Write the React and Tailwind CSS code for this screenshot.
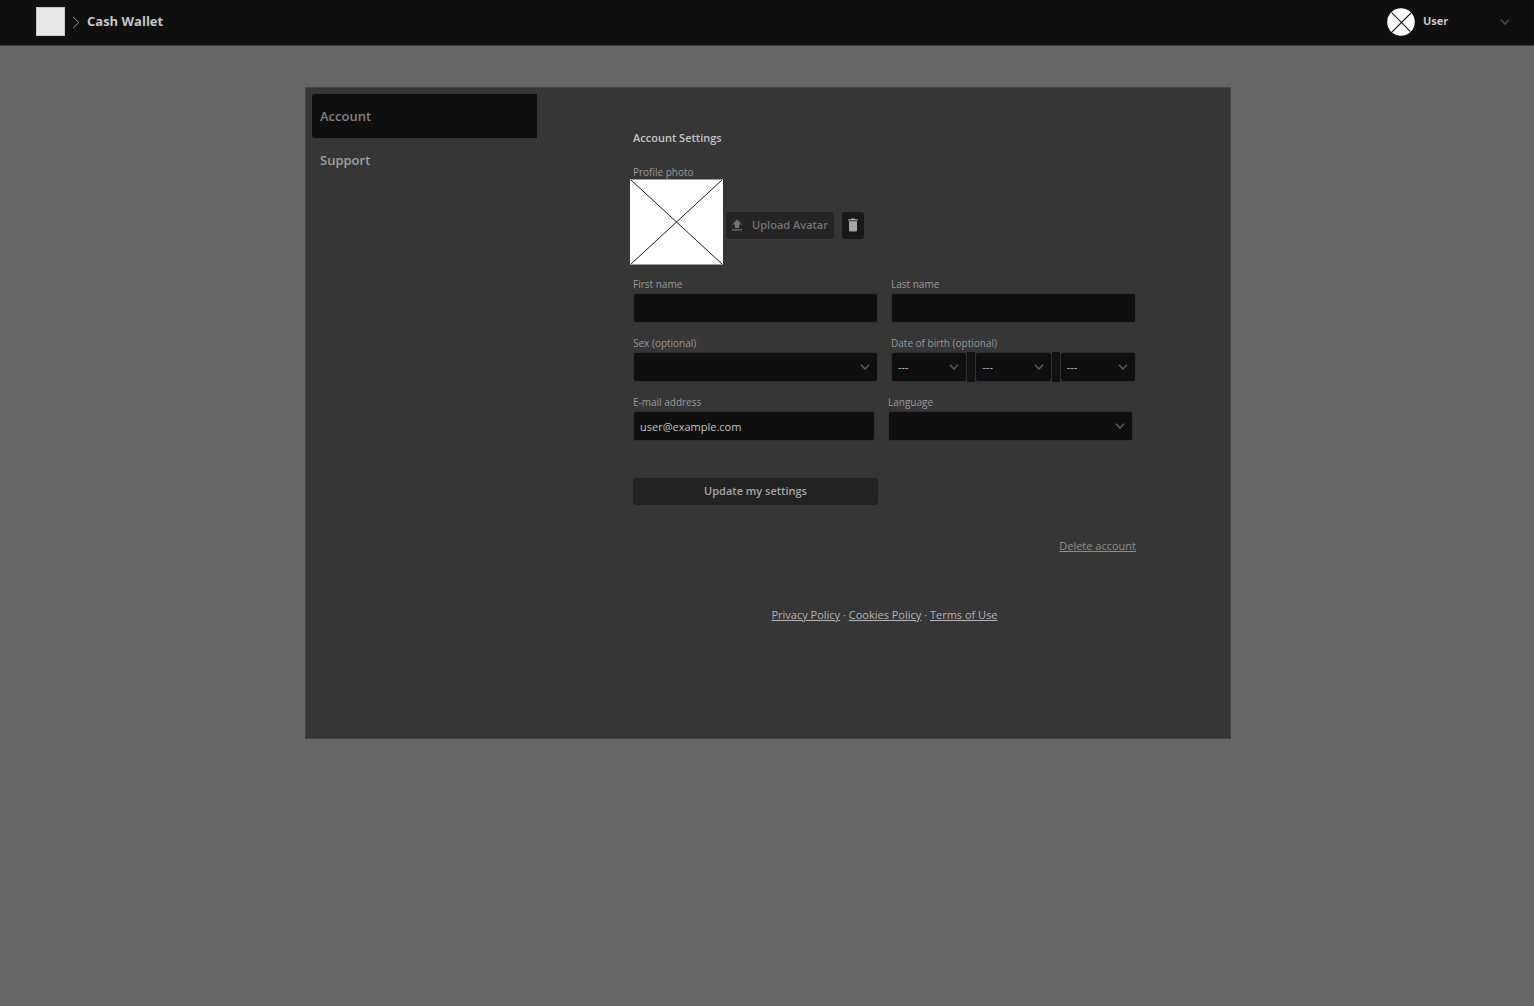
import React from "react";

const field =
  "block h-[30px] w-full appearance-none rounded-[3px] border border-[#2f2f2f] bg-[#0f0f0f] px-1.5 text-[11px] text-[#c0c0c0] outline-none";

function Chevron({ className }) {
  return (
    <svg viewBox="0 0 10 6" fill="none" stroke="currentColor" strokeWidth="1.6" className={className} aria-hidden="true">
      <path d="M1 0.8 5 5 9 0.8" />
    </svg>
  );
}

function Label({ htmlFor, children }) {
  return (
    <label htmlFor={htmlFor} className="block h-[17px] text-[10px] leading-4 text-[#999999]">
      {children}
    </label>
  );
}

function Select({ id, name, text = "" }) {
  return (
    <div className="relative min-w-0 flex-1">
      <select id={id} aria-label={name} className={field} defaultValue={text}>
        <option value={text}>{text}</option>
      </select>
      <Chevron className="pointer-events-none absolute right-2 top-3 h-1.5 w-2.5 text-[#585858]" />
    </div>
  );
}

function Spacer() {
  return <div className="h-[30px] w-2 shrink-0 bg-[#121212]" />;
}

function Header() {
  return (
    <header className="flex h-[46px] items-center justify-between border-b border-[#404040] bg-[#0f0f0f] pl-9 pr-6 pb-0.5">
      <div className="flex items-center">
        <div className="size-[29px] border border-[#c8c8c8] bg-[#e8e8e8]" />
        <svg viewBox="0 0 8 13" fill="none" stroke="#969696" className="ml-[7px] mt-0.5 h-[13px] w-2" aria-hidden="true">
          <path d="M1 0.8 6.8 6.5 1 12.2" />
        </svg>
        <h1 className="ml-[7px] text-[13px] font-bold text-[#c6c6c6]">Cash Wallet</h1>
      </div>
      <button type="button" className="flex w-[123px] items-center text-left">
        <svg viewBox="0 0 28 28" className="size-7" aria-hidden="true">
          <circle cx="14" cy="14" r="13.8" fill="#fff" />
          <path d="M4.6 4.4 23.4 23.6M24 5 5 24" stroke="#222" strokeWidth="1.1" />
        </svg>
        <span className="ml-2 flex-1 text-[11px] font-bold text-[#c6c6c6]">User</span>
        <Chevron className="h-1.5 w-2.5 text-[#484848]" />
      </button>
    </header>
  );
}

function Sidebar() {
  return (
    <nav className="w-[225px] shrink-0 text-[13px] font-semibold">
      <a href="#account" className="flex h-11 items-center rounded-l-[3px] bg-[#0f0f0f] px-2 pt-0.5 text-[#808080]">
        Account
      </a>
      <a href="#support" className="flex h-11 items-center px-2 pt-0.5 text-[#a0a0a0]">
        Support
      </a>
    </nav>
  );
}

function ProfilePhoto() {
  return (
    <section>
      <p className="text-[10px] leading-[14px] text-[#999999]">Profile photo</p>
      <div className="-ml-[3px] flex items-center">
        <svg viewBox="0 0 93 86" className="h-[86px] w-[93px]" role="img" aria-label="Profile photo">
          <path d="M0 0.5H93V85.5H0z" fill="#fff" />
          <path d="M1 1 92 85M92 1 1 85" stroke="#1c1c1c" strokeWidth="1" />
        </svg>
        <button
          type="button"
          className="ml-[3px] mt-1.5 flex h-[27px] w-[108px] items-center justify-between rounded-[3px] bg-[#242424] px-1.5 text-[11px] font-semibold text-[#747474]"
        >
          <svg viewBox="0 0 10 12" fill="currentColor" className="h-3 w-2.5" aria-hidden="true">
            <path d="M5 0.5 0.2 5.5H2.9V9H7.1V5.5H9.8zM0 10.3H10V11.4H0z" />
          </svg>
          Upload Avatar
        </button>
        <button
          type="button"
          aria-label="Remove photo"
          className="ml-2 mt-1.5 flex h-[27px] w-[22px] items-center justify-center rounded-[3px] bg-[#191919] text-[#a6a6a6]"
        >
          <svg viewBox="0 0 10 14" fill="currentColor" className="h-3.5 w-2.5" aria-hidden="true">
            <path d="M0.2 1.3H2.8L3.5 0.6H6.5L7.2 1.3H9.8V2.5H0.2zM1 3.3H9V12.2Q9 13.5 7.7 13.5H2.3Q1 13.5 1 12.2z" />
          </svg>
        </button>
      </div>
    </section>
  );
}

function SettingsForm() {
  return (
    <form className="mt-[11px] flex flex-col gap-3">
      <div className="flex gap-[13px]">
        <div className="flex-1">
          <Label htmlFor="first">First name</Label>
          <input id="first" type="text" className={field} />
        </div>
        <div className="flex-1">
          <Label htmlFor="last">Last name</Label>
          <input id="last" type="text" className={field} />
        </div>
      </div>
      <div className="flex gap-[13px]">
        <div className="flex-1">
          <Label htmlFor="sex">Sex (optional)</Label>
          <Select id="sex" name="Sex (optional)" />
        </div>
        <div className="flex-1">
          <Label htmlFor="birth-day">Date of birth (optional)</Label>
          <div className="flex items-center">
            <Select id="birth-day" name="Day of birth" text="---" />
            <Spacer />
            <Select id="birth-month" name="Month of birth" text="---" />
            <Spacer />
            <Select id="birth-year" name="Year of birth" text="---" />
          </div>
        </div>
      </div>
      <div className="flex gap-[13px] pr-[3px]">
        <div className="flex-1">
          <Label htmlFor="email">E-mail address</Label>
          <input id="email" type="email" defaultValue="user@example.com" className={field} />
        </div>
        <div className="w-[245px]">
          <Label htmlFor="language">Language</Label>
          <Select id="language" name="Language" />
        </div>
      </div>
      <button
        type="submit"
        className="mt-[25px] h-[27px] w-[245px] rounded-[3px] bg-[#222222] text-[11px] font-semibold text-[#a6a6a6]"
      >
        Update my settings
      </button>
    </form>
  );
}

const link = "underline underline-offset-1";

export default function App() {
  return (
    <div className="min-h-screen bg-[#666666] font-['Open_Sans',sans-serif]">
      <Header />
      <main className="pl-0.5 pt-[41px]">
        <div className="mx-auto flex min-h-[652px] max-w-[926px] border border-[#444444] bg-[#363636] pl-1.5 pt-1.5">
          <Sidebar />
          <div className="ml-24 w-[503px]">
            <h2 className="mt-9 text-[11px] leading-4 font-semibold text-[#c4c4c4]">Account Settings</h2>
            <div className="mt-[19px]">
              <ProfilePhoto />
            </div>
            <SettingsForm />
            <div className="mt-[33px] text-right text-[11px] leading-4 text-[#8c8c8c]">
              <a href="#delete" className={link}>Delete account</a>
            </div>
            <footer className="mt-[53px] text-center text-[11px] leading-4 text-[#b4b4b4]">
              <a href="#privacy" className={link}>Privacy Policy</a> · <a href="#cookies" className={link}>Cookies Policy</a> ·{" "}
              <a href="#terms" className={link}>Terms of Use</a>
            </footer>
          </div>
        </div>
      </main>
    </div>
  );
}
